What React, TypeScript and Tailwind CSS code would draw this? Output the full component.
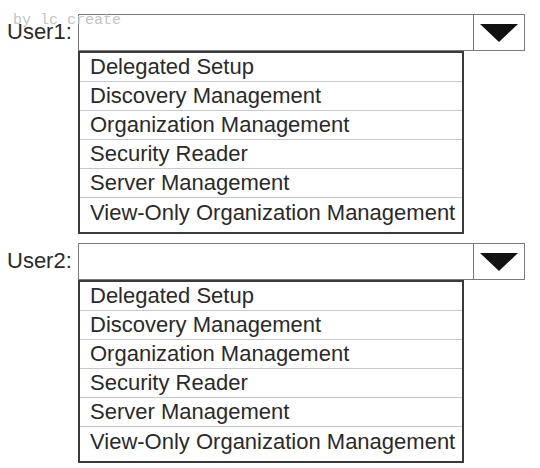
const roles = [
  'Delegated Setup',
  'Discovery Management',
  'Organization Management',
  'Security Reader',
  'Server Management',
  'View-Only Organization Management',
];

function RolePicker({ label }: { label: string }) {
  return (
    <div>
      <div className="flex items-center">
        <div className="w-[78px] pb-[2px] pl-[7px] text-[22px] leading-[20px] text-[#2a2a2a]">{label}</div>
        <div className="flex h-[37px] w-[447px] border border-[#7a7a7a] bg-white">
          <div className="flex-1" />
          <div className="flex w-[51px] items-center justify-center border-l border-[#7a7a7a]">
            <svg width="40" height="20" viewBox="0 0 40 20">
              <path d="M1 1 L39 1 L20 19 Z" fill="#111" />
            </svg>
          </div>
        </div>
      </div>
      <ul className="ml-[78px] w-[386px] border-2 border-[#3a3a3a] bg-white pb-[5px]">
        {roles.map((role, i) => (
          <li
            key={role}
            className={`flex h-[29px] items-center pl-[10px] text-[22px] leading-none text-[#2a2a2a] ${
              i < roles.length - 1 ? 'border-b border-[#c8c8c8]' : ''
            }`}
          >
            {role}
          </li>
        ))}
      </ul>
    </div>
  );
}

export default function App() {
  return (
    <div
      className="relative h-[468px] w-[540px] bg-white pt-[14px]"
      style={{ fontFamily: '"Liberation Sans", Arial, sans-serif' }}
    >
      <div className="flex flex-col gap-[9px]">
        <RolePicker label="User1:" />
        <RolePicker label="User2:" />
      </div>
      {/* faint stamp in the top-left corner */}
      <span className="absolute left-[13px] top-[14px] text-[15px] leading-[14px] text-[#c4c4c4] [font-family:'Liberation_Mono',monospace]">
        by lc create
      </span>
    </div>
  );
}
